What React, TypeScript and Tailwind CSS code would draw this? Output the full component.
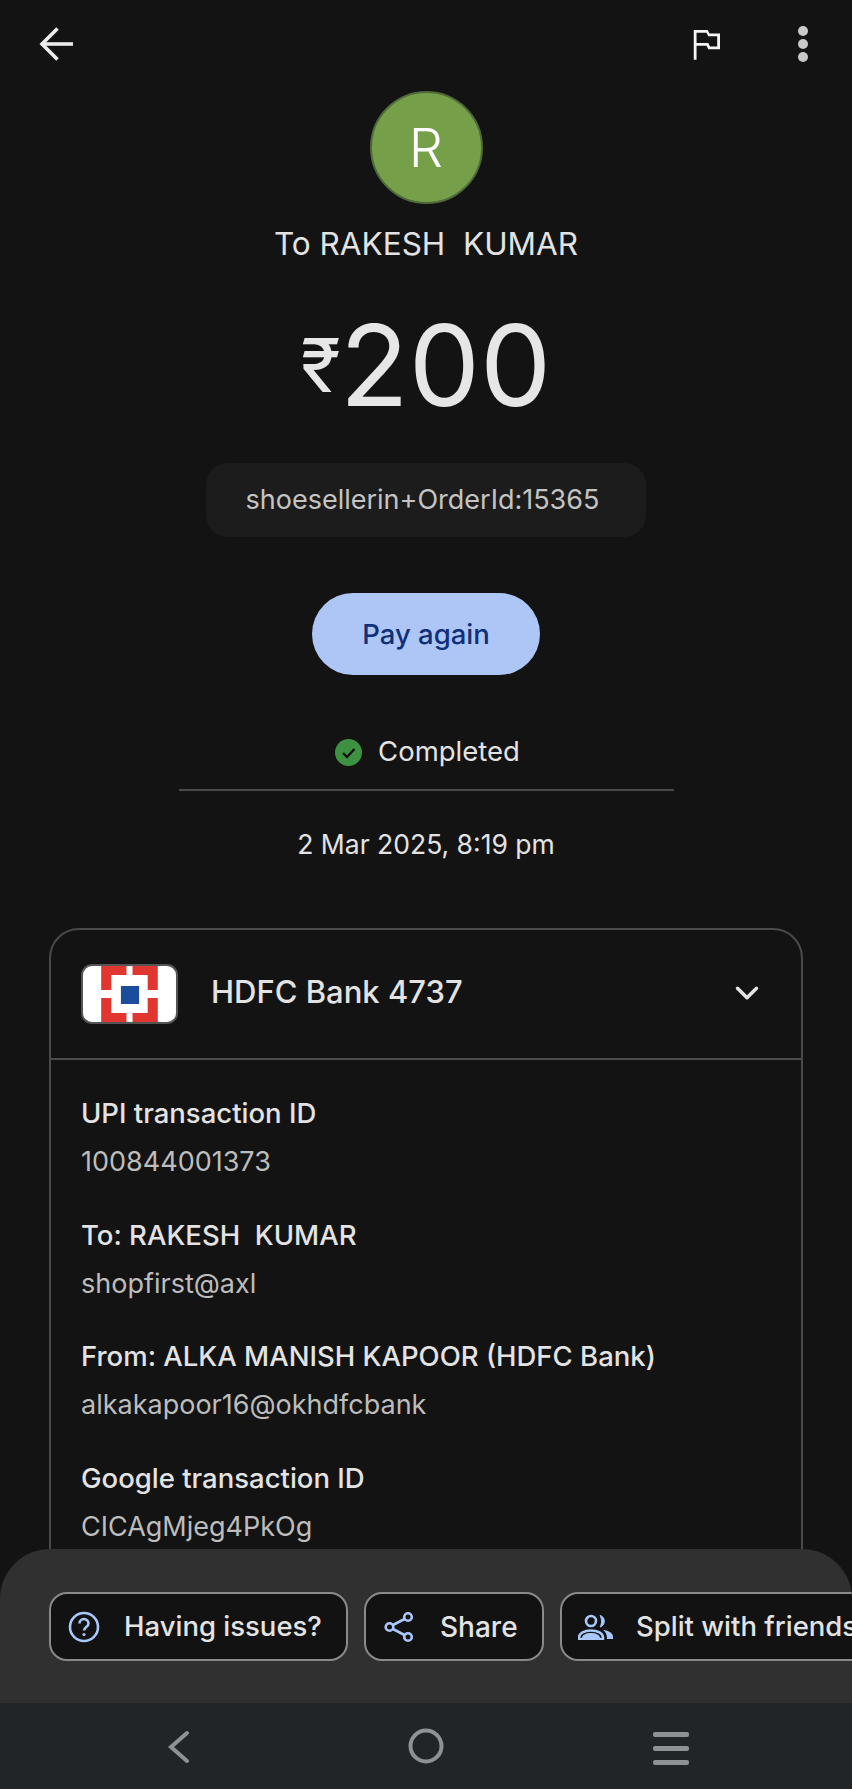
import React from 'react';
import { ChevronDown } from 'lucide-react';

const rows = [
  { title: 'UPI transaction ID', value: '100844001373' },
  { title: 'To: RAKESH  KUMAR', value: 'shopfirst@axl' },
  { title: 'From: ALKA MANISH KAPOOR (HDFC Bank)', value: 'alkakapoor16@okhdfcbank' },
  { title: 'Google transaction ID', value: 'CICAgMjeg4PkOg' },
];

const HdfcLogo: React.FC = () => (
  <svg width="97" height="60" viewBox="0 0 96 60" preserveAspectRatio="none" className="shrink-0">
    <rect x="1" y="1" width="94" height="58" rx="10" fill="#ffffff" stroke="#555555" strokeWidth="2" />
    <path d="M20 2H45V11H30V26H20Z M51 2H76V26H66V11H51Z M20 34H30V49H45V58H20Z M66 34H76V58H51V49H66Z" fill="#e0362f" />
    <rect x="39.500" y="22" width="18" height="18" fill="#1b4d9c" />
  </svg>
);

const App: React.FC = () => {
  return (
    <div className="flex flex-col h-[1789px] w-[852px] overflow-hidden bg-[#131313] font-['Inter',sans-serif] text-[#e3e3e3]">
      <div className="flex-1 min-h-0 overflow-hidden flex flex-col items-center">
        {/* Top bar */}
        <div className="w-full h-[88px] shrink-0 flex items-center justify-between pl-[33px] pr-[25px] text-[#ececec]">
          <svg width="48" height="48" viewBox="0 0 48 48" fill="none" stroke="currentColor" strokeWidth="3.6">
            <path d="M40 24H9" />
            <path d="M24.500 8.500 9 24l15.500 15.500" />
          </svg>
          <div className="flex items-center gap-[52px]">
            <svg width="42" height="42" viewBox="0 0 24 24" fill="#f5f5f5">
              <path d="M14 6l-1-2H5v17h1.600v-8H12.300l1 2H20V6h-6zm4.400 7.400h-4.100l-1-2H6.600V5.600h5.700l1 2h5.100v5.800z" />
            </svg>
            <svg width="48" height="48" viewBox="0 0 48 48" fill="#c9c9c9">
              <circle cx="24" cy="11" r="5" />
              <circle cx="24" cy="24" r="5" />
              <circle cx="24" cy="37" r="5" />
            </svg>
          </div>
        </div>

        {/* Avatar and amount */}
        <div className="mt-[3px] w-[113px] h-[113px] shrink-0 rounded-full bg-[#769f4a] border-2 border-[#4f6a3a] flex items-center justify-center text-[54px] leading-none text-white font-light">
          R
        </div>
        <div className="mt-5 shrink-0 text-[31.5px] leading-[40px] whitespace-pre">To RAKESH  KUMAR</div>
        <div className="mt-[41px] shrink-0 h-[120px] flex items-start">
          <span className="text-[74px] leading-[120px] -mr-[1px] text-[#e6e6e6]">₹</span>
          <span className="text-[113px] leading-[120px] text-[#e6e6e6]">200</span>
        </div>
        <div className="mt-[38px] shrink-0 w-[440px] h-[74px] pr-[7px] rounded-[22px] bg-[#1c1c1c] flex items-center justify-center text-[27px] text-[#c4c4c4]">
          shoesellerin+OrderId:15365
        </div>
        <button className="mt-[56px] shrink-0 w-[228px] h-[82px] pt-[2px] rounded-full bg-[#aec6f5] text-[#0f2f78] text-[27.5px] font-medium">
          Pay again
        </button>

        {/* Status */}
        <div className="mt-[59px] shrink-0 h-9 pl-[3px] flex items-center gap-[16px] text-[27.5px]">
          <svg width="27" height="27" viewBox="0 0 27 27">
            <circle cx="13.500" cy="13.500" r="13.500" fill="#3f9142" />
            <path d="M8 14l4 4 7.500-8" fill="none" stroke="#131313" strokeWidth="2.400" />
          </svg>
          <span>Completed</span>
        </div>
        <div className="mt-[19px] shrink-0 w-[495px] h-[2px] bg-[#4b4b4b]" />
        <div className="mt-[35px] shrink-0 text-[26.5px] leading-9">2 Mar 2025, 8:19 pm</div>

        {/* Bank card */}
        <div className="mt-[66px] w-[754px] shrink-0 rounded-[30px] border-2 border-[#4a4a4a] pb-16">
          <div className="h-[130px] pl-[30px] pr-[35px] flex items-center border-b-2 border-[#4a4a4a]">
            <HdfcLogo />
            <span className="ml-[33px] -mt-[3px] flex-1 text-[31px] font-medium">HDFC Bank 4737</span>
            <ChevronDown size={38} strokeWidth={2.2} className="text-[#e3e3e3] -mt-[2px]" />
          </div>
          <div className="pt-[35px] pl-[30px] flex flex-col gap-[36.5px]">
            {rows.map(row => (
              <div key={row.title} className="flex flex-col gap-[13px]">
                <div className="text-[27.5px] leading-9 font-medium whitespace-pre">{row.title}</div>
                <div className="text-[27px] leading-9 text-[#bdbdbd]">{row.value}</div>
              </div>
            ))}
          </div>
        </div>
      </div>

      {/* Bottom sheet */}
      <div className="shrink-0 h-[154px] rounded-t-[50px] bg-[#303030] pt-[43px] pl-[49px] flex items-start gap-[16px] overflow-hidden">
        <div className="shrink-0 w-[299px] h-[69px] rounded-[18px] border-2 border-[#8a8a8a] bg-[#121212] flex items-center pl-[17px] gap-[24px] text-[27.5px] font-medium">
          <svg width="32" height="32" viewBox="0 0 32 32" fill="none" stroke="#a8c7fa" strokeWidth="2.6">
            <circle cx="16" cy="16" r="14" />
            <path d="M11.500 12.500a4.500 4.500 0 0 1 9 0c0 3.500-4.500 3.500-4.500 7" />
            <circle cx="16" cy="23.500" r="1.600" fill="#a8c7fa" stroke="none" />
          </svg>
          <span>Having issues?</span>
        </div>
        <div className="shrink-0 w-[180px] h-[69px] rounded-[18px] border-2 border-[#8a8a8a] bg-[#121212] flex items-center pl-[18px] gap-[26px] text-[28px] font-medium">
          <svg width="30" height="32" viewBox="0 0 30 32" fill="none" stroke="#a8c7fa" strokeWidth="2.6">
            <circle cx="24" cy="6" r="3.800" />
            <circle cx="5.500" cy="16" r="3.800" />
            <circle cx="24" cy="26" r="3.800" />
            <path d="M9 14 20.500 8M9 18l11.500 6" />
          </svg>
          <span>Share</span>
        </div>
        <div className="shrink-0 w-[320px] h-[69px] rounded-[18px] border-2 border-[#8a8a8a] bg-[#121212] flex items-center pl-[16px] gap-[22px] text-[27.5px] font-medium whitespace-nowrap">
          <svg width="36" height="26" viewBox="0 0 36 26" className="shrink-0">
            <circle cx="13" cy="7" r="5" fill="none" stroke="#a8c7fa" strokeWidth="2.6" />
            <path d="M22 1.500a6 6 0 0 1 0 11.500c2-3 2-8.500 0-11.500Z" fill="#a8c7fa" stroke="#a8c7fa" strokeWidth="1" />
            <path d="M1 25v-1.500c0-4.500 5.500-7 12-7s12 2.500 12 7V25Z" fill="none" stroke="#a8c7fa" strokeWidth="2.6" />
            <path d="M25 16c6 .5 10 3 10 7v2h-6c0-4-1-7-4-9Z" fill="#a8c7fa" />
            <path d="M4 24c0-3 4-5 9-5s9 2 9 5Z" fill="#a8c7fa" />
          </svg>
          <span>Split with friends</span>
        </div>
      </div>

      {/* Android nav */}
      <div className="shrink-0 h-[86px] pt-1 bg-[#212528] flex items-center justify-between pl-[160px] pr-[163px]">
        <svg width="40" height="40" viewBox="0 0 40 40" fill="none" stroke="#8f9294" strokeWidth="4" strokeLinecap="round">
          <path d="M27 5 11 19l16 14" />
        </svg>
        <svg width="40" height="40" viewBox="0 0 40 40" fill="none" stroke="#8f9294" strokeWidth="4">
          <circle cx="19" cy="18" r="15.500" />
        </svg>
        <svg width="36" height="36" viewBox="0 0 36 36" fill="#8f9294">
          <rect x="0" y="2" width="36" height="5" rx="2" />
          <rect x="0" y="16" width="36" height="5" rx="2" />
          <rect x="0" y="30" width="36" height="5" rx="2" />
        </svg>
      </div>
    </div>
  );
};

export default App;
